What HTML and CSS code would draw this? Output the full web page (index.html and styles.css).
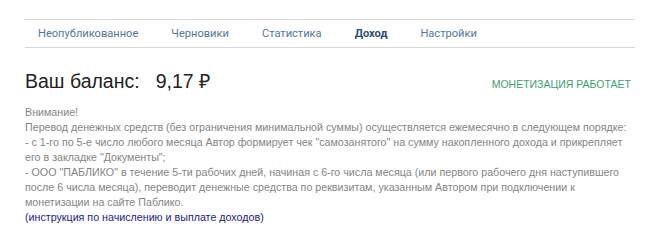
FILE: index.html
```html
<!DOCTYPE html>
<html lang="ru">
<head>
<meta charset="utf-8">
<link rel="stylesheet" href="styles.css">
</head>
<body>
<nav class="tabs">
  <a class="tab">Неопубликованное</a>
  <a class="tab">Черновики</a>
  <a class="tab">Статистика</a>
  <a class="tab active">Доход</a>
  <a class="tab">Настройки</a>
</nav>
<div class="balance-row">
  <div class="balance"><span class="label">Ваш баланс:</span><span class="amount">9,17 ₽</span></div>
  <div class="status">МОНЕТИЗАЦИЯ РАБОТАЕТ</div>
</div>
<div class="notice">
  <p>Внимание!<br>
  Перевод денежных средств (без ограничения минимальной суммы) осуществляется ежемесячно в следующем порядке:<br>
  - с 1-го по 5-е число любого месяца Автор формирует чек "самозанятого" на сумму накопленного дохода и прикрепляет его в закладке "Документы";<br>
  - ООО "ПАБЛИКО" в течение 5-ти рабочих дней, начиная с 6-го числа месяца (или первого рабочего дня наступившего после 6 числа месяца), переводит денежные средства по реквизитам, указанным Автором при подключении к монетизации на сайте Паблико.</p>
  <a class="link">(инструкция по начислению и выплате доходов)</a>
</div>
</body>
</html>
```
FILE: styles.css
```css
html, body { margin: 0; padding: 0; background: #fff; }
body { font-family: "Liberation Sans", Arial, sans-serif; }
.tabs {
  display: flex;
  margin: 19px 15px 0 25px;
  padding-left: 13px;
  height: 27px;
  align-items: center;
  border-top: 1px solid #d6d6d6;
  border-bottom: 1px solid #d6d6d6;
  font-family: Roboto, sans-serif;
  font-size: 11.1px;
  gap: 33px;
}
.tab { color: #52789c; }
.tab.active { color: #2b4f73; font-weight: 700; }
.balance-row {
  display: flex;
  justify-content: space-between;
  align-items: center;
  margin-top: 19px;
  padding: 0 19px 0 25px;
}
.balance { font-size: 19.5px; color: #222; }
.amount { margin-left: 16px; }
.status { color: #3fa070; font-size: 10.5px; margin-top: 7px; }
.notice {
  margin-top: 11px;
  padding: 0 10px 0 25px;
  font-size: 10.7px;
  line-height: 15px;
  color: #858585;
}
.notice p { margin: 0; }
.link { color: #1b1b8f; }
```
